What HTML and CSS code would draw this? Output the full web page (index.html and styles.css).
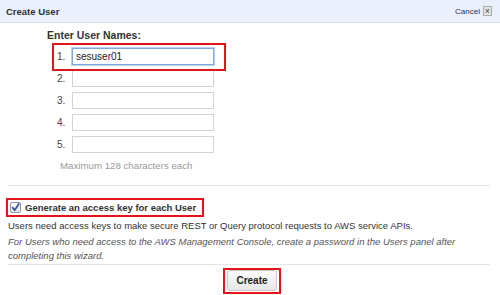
FILE: index.html
```html
<!DOCTYPE html>
<html lang="en">
<head>
  <meta charset="UTF-8" />
  <meta name="viewport" content="width=device-width, initial-scale=1.0"/>
  <title>Create User</title>
  <link rel="stylesheet" href="styles.css">
</head>
<body>
  <div class="dialog">
    <div class="titlebar">
      <span class="title">Create User</span>
      <span class="cancel">Cancel <span class="close">&times;</span></span>
    </div>

    <div class="names">
      <div class="names-label">Enter User Names:</div>
      <div class="row marked"><span class="num">1.</span><input class="name focused" type="text" value="sesuser01"></div>
      <div class="row"><span class="num">2.</span><input class="name" type="text"></div>
      <div class="row"><span class="num">3.</span><input class="name" type="text"></div>
      <div class="row"><span class="num">4.</span><input class="name" type="text"></div>
      <div class="row"><span class="num">5.</span><input class="name" type="text"></div>
      <div class="hint">Maximum 128 characters each</div>
    </div>

    <div class="rule"></div>

    <div class="access">
      <label class="check marked-box">
        <svg class="tick" width="11" height="11" viewBox="0 0 11 11">
          <defs>
            <linearGradient id="boxfill" x1="0" y1="0" x2="0" y2="1">
              <stop offset="0" stop-color="#ffffff"/>
              <stop offset="1" stop-color="#dfe3ea"/>
            </linearGradient>
          </defs>
          <rect x="0.5" y="0.5" width="10" height="10" rx="1.5" fill="url(#boxfill)" stroke="#8b95a5"/>
          <path d="M2.6 5.6 L4.6 8.2 L8.8 2" fill="none" stroke="#2a4f9c" stroke-width="1.7" stroke-linecap="round" stroke-linejoin="round"/>
        </svg>
        Generate an access key for each User
      </label>
      <p class="desc">Users need access keys to make secure REST or Query protocol requests to AWS service APIs.</p>
      <p class="note">For Users who need access to the AWS Management Console, create a password in the Users panel after completing this wizard.</p>
    </div>

    <div class="rule"></div>

    <div class="actions">
      <span class="marked-box"><button class="create">Create</button></span>
    </div>
  </div>
</body>
</html>
```

FILE: styles.css
```css
* { margin: 0; padding: 0; box-sizing: border-box; }
body {
  background: #fff;
  color: #333;
  font-family: 'Liberation Sans', Arial, sans-serif;
  font-size: 9.5px;
}
.dialog {
  width: 500px;
  height: 295px;
  display: flex;
  flex-direction: column;
}
.titlebar {
  height: 23px;
  background: #e9f0fb;
  border-bottom: 1px solid #d6e1f0;
  display: flex;
  align-items: center;
  justify-content: space-between;
  padding: 0 8px 0 6px;
}
.title {
  font-weight: bold;
  font-size: 9.5px;
  color: #333;
}
.cancel {
  font-size: 8px;
  color: #2b2f6b;
  display: flex;
  align-items: center;
  gap: 3px;
}
.close {
  width: 9px;
  height: 10px;
  border: 1px solid #aaa;
  background: #e4e4e4;
  color: #444;
  font-size: 9px;
  line-height: 8px;
  text-align: center;
}
.names {
  padding: 5px 0 0 47px;
}
.names-label {
  font-weight: bold;
  font-size: 10.5px;
  line-height: 14px;
  margin-bottom: 4px;
}
.row {
  width: 168px;
  height: 22px;
  margin-left: 8px;
  padding: 2px 9px 3px 2px;
  display: flex;
  align-items: flex-start;
}
.row.marked {
  outline: 2px solid #e2151f;
  outline-offset: 1px;
}
.num {
  width: 15px;
  font-size: 10px;
  line-height: 17px;
  color: #444;
}
.name {
  width: 142px;
  height: 17px;
  border: 1px solid #d3d3d3;
  padding: 0 3px;
  font: 10px 'Liberation Sans', Arial, sans-serif;
  color: #222;
  outline: none;
}
.name.focused {
  border-color: #7fa7d8;
  box-shadow: 0 0 0 1px #b9d1ee;
}
.hint {
  margin: 3px 0 0 13px;
  font-size: 9.7px;
  line-height: 14px;
  color: #999;
}
.rule {
  height: 1px;
  background: #e3e3e3;
  margin: 12px 10px 0 8px;
}
.access {
  padding: 12px 8px 0;
}
.marked-box {
  border: 2px solid #e2151f;
}
.check {
  display: inline-flex;
  align-items: center;
  gap: 4px;
  width: 198px;
  height: 19px;
  margin-left: -2px;
  padding-left: 2px;
  font-weight: bold;
  white-space: nowrap;
}
.tick {
  flex: none;
}
.desc {
  margin-top: 2px;
  line-height: 14px;
}
.note {
  margin-top: 2px;
  line-height: 14px;
  font-style: italic;
  color: #555;
}
.rule + .actions {
  margin-top: 3px;
}
.access + .rule {
  margin-top: 1px;
}
.actions {
  display: flex;
  justify-content: center;
  padding-left: 4px;
}
.actions .marked-box {
  padding: 0 2px 1px;
}
.create {
  width: 50px;
  height: 21px;
  border: 1px solid #c6c6c6;
  border-radius: 3px;
  background: linear-gradient(#fcfcfc, #e6e6e6);
  font: bold 10px 'Liberation Sans', Arial, sans-serif;
  color: #222;
}
```
